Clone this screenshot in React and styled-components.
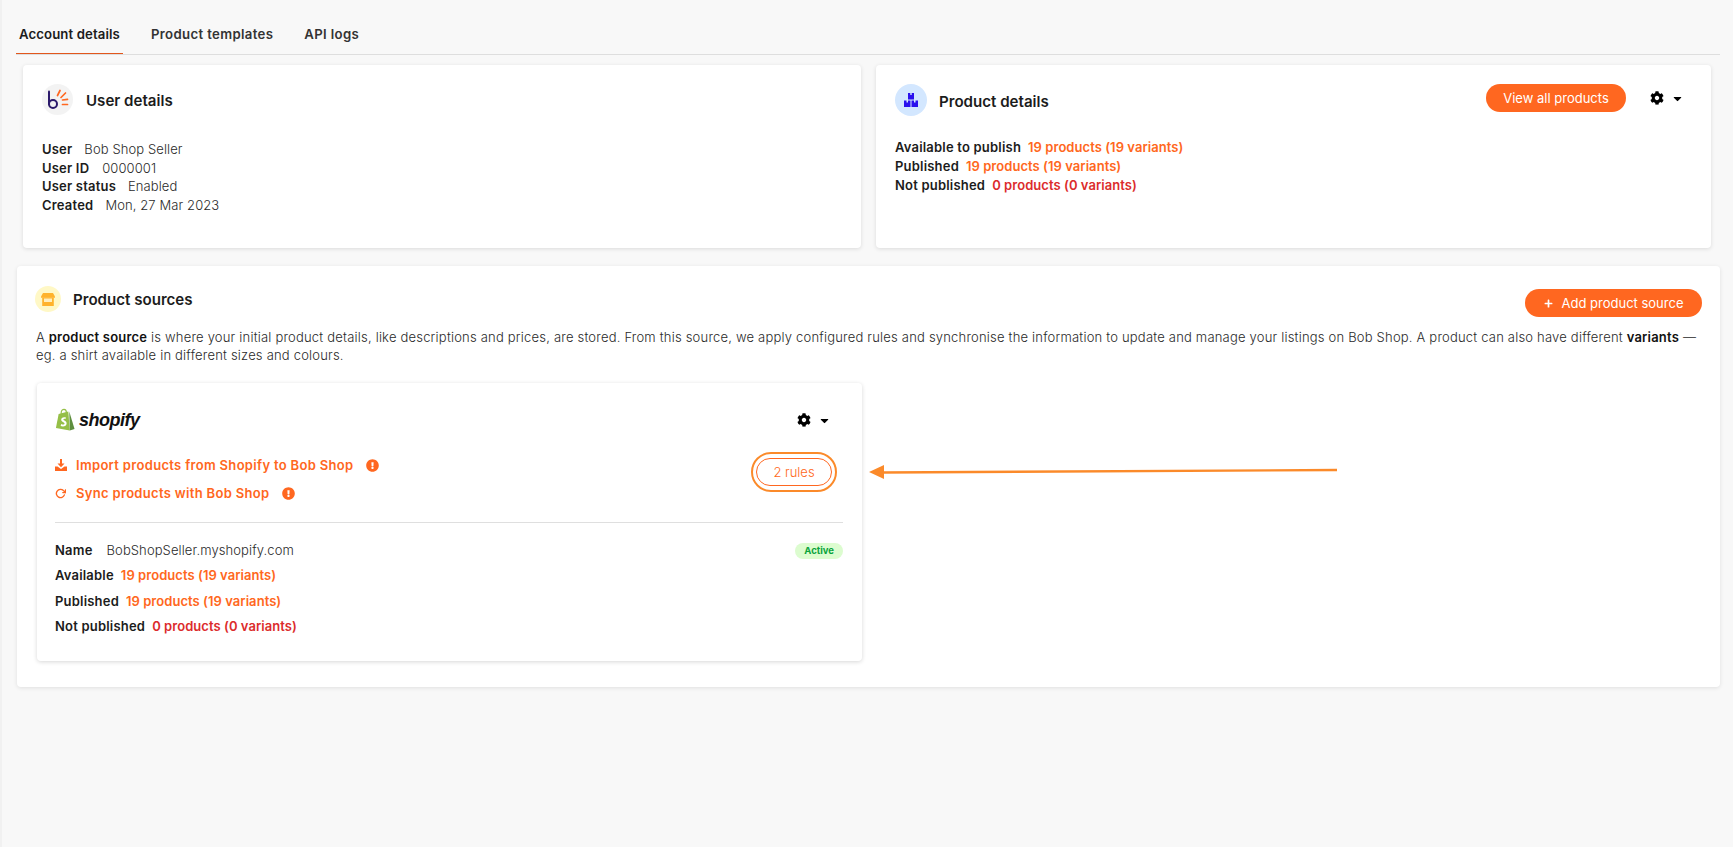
import styled, { createGlobalStyle } from "styled-components";
import { FaCog, FaCaretDown, FaExclamationCircle, FaPlus } from "react-icons/fa";
import { FiRotateCw } from "react-icons/fi";

const orange = "#ff6720";
const red = "#dc2c2c";
const ink = "#1c1c1c";

const GlobalStyle = createGlobalStyle`
  html, body {
    margin: 0;
    padding: 0;
    background: #f8f8f8;
    font-family: Inter, "Open Sans", sans-serif;
    color: ${ink};
  }
`;

const Page = styled.div`
  position: relative;
  width: 1733px;
  height: 847px;
  box-sizing: border-box;
  padding: 16px 13px 0 15px;
  overflow: hidden;
  border-left: 2px solid #f1f1f1;
  background: #f8f8f8;
`;

const Tabs = styled.div`
  display: flex;
  height: 38px;
  gap: 1px;
  border-bottom: 1px solid #dedede;
  margin-left: -1px;
`;

const Tab = styled.div`
  height: 38px;
  box-sizing: border-box;
  padding: 10px 3px 0;
  margin-right: 24px;
  font-size: 13.2px;
  font-weight: 600;
  letter-spacing: ${({ $active }) => ($active ? "0.1px" : "0.35px")};
  color: ${({ $active }) => ($active ? "#1c1c1c" : "#333")};
  border-bottom: ${({ $active }) => ($active ? "1px solid #e2571c" : "none")};
`;

const TopRow = styled.div`
  display: grid;
  grid-template-columns: 838px 835px;
  gap: 15px;
  margin: 10px 0 0 6px;
`;

const Card = styled.div`
  height: 183px;
  box-sizing: border-box;
  background: #fff;
  border-radius: 4px;
  box-shadow: 0 1px 4px rgba(0, 0, 0, 0.12);
  padding: 19px;
`;

const CardHead = styled.div`
  display: flex;
  align-items: center;
`;

const IconCircle = styled.div`
  display: flex;
  align-items: center;
  justify-content: center;
  flex: none;
  width: ${({ $size }) => $size}px;
  height: ${({ $size }) => $size}px;
  border-radius: 50%;
  background: ${({ $bg }) => $bg};
`;

const CardTitle = styled.div`
  margin-left: ${({ $gap }) => $gap}px;
  padding-top: ${({ $top }) => $top}px;
  font-size: 15.1px;
  font-weight: 600;
`;

const InfoList = styled.div`
  margin-top: ${({ $top }) => $top}px;
  font-size: 13px;
  line-height: ${({ $line }) => $line}px;
`;

const InfoRow = styled.div`
  white-space: nowrap;
`;

const Label = styled.span`
  font-weight: 600;
  letter-spacing: 0.2px;
  margin-right: ${({ $gap }) => $gap}px;
`;

const Value = styled.span`
  font-weight: 300;
  letter-spacing: 0.1px;
  color: #2a2a2a;
`;

const Count = styled.span`
  font-weight: 600;
  letter-spacing: 0.05px;
  color: ${({ $danger }) => ($danger ? red : orange)};
`;

const Spacer = styled.div`
  flex: 1;
`;

const PillButton = styled.div`
  display: flex;
  align-items: center;
  justify-content: center;
  box-sizing: border-box;
  width: ${({ $w }) => $w}px;
  height: 28px;
  border-radius: 14px;
  background: ${orange};
  color: #fff;
  font-size: 13px;
  font-weight: 400;
  white-space: nowrap;
  margin-top: ${({ $top }) => $top || 0}px;
`;

const PlusMark = styled(FaPlus)`
  margin-right: 9px;
`;

const GearMenu = styled.div`
  display: flex;
  align-items: center;
  gap: 7px;
  color: #000;
  margin: ${({ $top }) => $top}px ${({ $right }) => $right}px 0 ${({ $left }) => $left}px;
`;

const SourcesPanel = styled.div`
  height: 421px;
  box-sizing: border-box;
  margin-top: 18px;
  padding: 20px 18px 0 18px;
  background: #fff;
  border-radius: 4px;
  box-shadow: 0 1px 4px rgba(0, 0, 0, 0.1);
`;

const SourcesHead = styled.div`
  display: flex;
  align-items: flex-start;
`;

const SourcesIntro = styled.p`
  margin: 11px 0 0 1px;
  font-size: 13px;
  line-height: 18px;
  font-weight: 300;
  letter-spacing: 0.2px;
  color: #2a2a2a;
  width: 1668px;

  b {
    font-weight: 600;
    color: #111;
  }
`;

const SourceCard = styled.div`
  width: 825px;
  height: 278px;
  box-sizing: border-box;
  margin: 19px 0 0 2px;
  padding: 24px 19px 0 18px;
  background: #fff;
  border-radius: 4px;
  box-shadow: 0 1px 4px rgba(0, 0, 0, 0.16);
`;

const SourceTop = styled.div`
  display: flex;
  align-items: center;
  height: 26px;
`;

const ShopifyLogo = styled.div`
  display: flex;
  align-items: center;
  gap: 4px;
`;

const ShopifyWord = styled.span`
  font-family: "Liberation Sans", sans-serif;
  font-size: 18px;
  font-weight: 700;
  font-style: italic;
  letter-spacing: -0.5px;
  color: #111;
`;

const ActionBlock = styled.div`
  display: flex;
  justify-content: space-between;
  margin-top: 17px;
  height: 61px;
  border-bottom: 1px solid #dfdfdf;
  padding-bottom: 11px;
`;

const ActionList = styled.div`
  display: flex;
  flex-direction: column;
  gap: 10px;
  padding-top: 6px;
`;

const Action = styled.div`
  display: flex;
  align-items: center;
  height: 18px;
  color: ${orange};
  font-size: 13px;
  font-weight: 600;
  letter-spacing: 0.32px;
`;

const ActionIcon = styled.span`
  display: flex;
  width: 21px;
`;

const Alert = styled.span`
  display: flex;
  margin-left: 13px;
`;

const RulesRing = styled.div`
  display: flex;
  box-sizing: border-box;
  padding: 4px 3px;
  margin: 2px 6px 0 0;
  height: 40px;
  border: 2px solid #fb8a2a;
  border-radius: 20px;
  background: #fff;
`;

const RulesButton = styled.div`
  display: flex;
  align-items: center;
  justify-content: center;
  width: 74px;
  border: 1px solid ${orange};
  border-radius: 14px;
  color: ${orange};
  font-size: 13px;
  font-weight: 300;
`;

const SourceInfo = styled.div`
  position: relative;
  padding-top: 18px;
  font-size: 13px;
`;

const SourceRow = styled.div`
  height: 25.4px;
  line-height: 18px;
  white-space: nowrap;
`;

const ActiveBadge = styled.span`
  position: absolute;
  right: 0;
  top: 20px;
  height: 16px;
  line-height: 16px;
  padding: 0 9px;
  border-radius: 8px;
  background: #dcfccf;
  color: #0aa33c;
  font-size: 9.5px;
  font-weight: 700;
`;

const Arrow = styled.svg`
  position: absolute;
  left: 867px;
  top: 460px;
`;

const BobMark = () => (
  <svg width="22" height="24" viewBox="0 0 22 24" fill="none">
    <path d="M2 3.500V16" stroke="#2b1a6b" strokeWidth="2" strokeLinecap="round" />
    <circle cx="6" cy="16" r="4" stroke="#2b1a6b" strokeWidth="2" />
    <path
      d="M10.500 7.500 13 2.500M14 9.500l4.500-4.500M15.500 12l5-.7M15.500 16.500h5"
      stroke="#ff6720"
      strokeWidth="1.700"
      strokeLinecap="round"
    />
  </svg>
);

const BoxesIcon = () => (
  <svg width="14" height="14" viewBox="0 0 14 14" fill="#2a10ee">
    <path d="M4 0h2.300v2h1.400V0H10v6.500H4z" />
    <path d="M0 7.500h2.500v2H4v-2h2.500V14H0z" />
    <path d="M7.500 7.500H10v2h1.500v-2H14V14H7.500z" />
  </svg>
);

const StoreIcon = () => (
  <svg width="14" height="13" viewBox="0 0 14 13">
    <path d="M2 0h10l2 3.500v1.200H0V3.500z" fill="#ffb32c" />
    <path d="M1.200 4.500h11.600V13H1.200z" fill="#ffb32c" />
    <path d="M3 5.500h8v3.500H3z" fill="#ffeebd" />
  </svg>
);

const ShopifyBag = () => (
  <svg width="20" height="24" viewBox="0 0 21 24">
    <path d="M1 20.500 3.800 5.800 14 3l1.500 20z" fill="#95bf47" />
    <path d="M15 3.200 20.500 21.500 15.500 23z" fill="#5e8e3e" />
    <path d="M6.500 6V4.500C6.500 2 8 .8 9.500.8s2.500 1.500 2.500 3.500" fill="none" stroke="#95bf47" strokeWidth="1.200" />
    <path d="M11.500 9.500c-3-1-5 .5-5 2.200 0 2.300 3.500 2.400 3.500 4 0 1.300-2 1.300-3.500.4l-.6 2.200c2.800 1.200 6.300.3 6.300-2.900 0-2.700-3.400-2.900-3.400-4 0-.8 1.200-1 2.200-.5z" fill="#fff" />
  </svg>
);

const ImportIcon = () => (
  <svg width="12" height="12" viewBox="0 0 12 12" fill={orange}>
    <path d="M5 0h2v4.500h2.500L6 8.200 2.500 4.500H5z" />
    <path d="M0 7.500h2.500L6 10l3.500-2.500H12V12H0z" />
  </svg>
);

const Gear = ({ left = 0, right = 0, top = 0 }) => (
  <GearMenu $left={left} $right={right} $top={top}>
    <FaCog size={14} />
    <FaCaretDown size={13} />
  </GearMenu>
);

export default function App() {
  return (
    <>
      <GlobalStyle />
      <Page>
        <Tabs>
          <Tab $active>Account details</Tab>
          <Tab>Product templates</Tab>
          <Tab>API logs</Tab>
        </Tabs>

        <TopRow>
          <Card>
            <CardHead>
              <IconCircle $size={31} $bg="#f3f3f3">
                <BobMark />
              </IconCircle>
              <CardTitle $gap={13} $top={2}>User details</CardTitle>
            </CardHead>
            <InfoList $top={25} $line={18.6}>
              <InfoRow><Label $gap={12}>User</Label><Value>Bob Shop Seller</Value></InfoRow>
              <InfoRow><Label $gap={13}>User ID</Label><Value>0000001</Value></InfoRow>
              <InfoRow><Label $gap={12}>User status</Label><Value>Enabled</Value></InfoRow>
              <InfoRow><Label $gap={12}>Created</Label><Value>Mon, 27 Mar 2023</Value></InfoRow>
            </InfoList>
          </Card>

          <Card>
            <CardHead>
              <IconCircle $size={32} $bg="#d3e7ff">
                <BoxesIcon />
              </IconCircle>
              <CardTitle $gap={12} $top={2}>Product details</CardTitle>
              <Spacer />
              <PillButton $w={140} $top={-4}>View all products</PillButton>
              <Gear left={24} right={8} top={-4} />
            </CardHead>
            <InfoList $top={22} $line={19}>
              <InfoRow><Label $gap={7}>Available to publish</Label><Count>19 products (19 variants)</Count></InfoRow>
              <InfoRow><Label $gap={7}>Published</Label><Count>19 products (19 variants)</Count></InfoRow>
              <InfoRow><Label $gap={7}>Not published</Label><Count $danger>0 products (0 variants)</Count></InfoRow>
            </InfoList>
          </Card>
        </TopRow>

        <SourcesPanel>
          <SourcesHead>
            <IconCircle $size={26} $bg="#fff8c6">
              <StoreIcon />
            </IconCircle>
            <CardTitle $gap={12} $top={4}>Product sources</CardTitle>
            <Spacer />
            <PillButton $w={177} $top={3}>
              <PlusMark size={9} />
              Add product source
            </PillButton>
          </SourcesHead>
          <SourcesIntro>
            A <b>product source</b> is where your initial product details, like descriptions and prices, are stored. From this source, we apply configured rules and synchronise the information to update and manage your listings on Bob Shop. A product can also have different <b>variants</b> —
            <br />
            eg. a shirt available in different sizes and colours.
          </SourcesIntro>

          <SourceCard>
            <SourceTop>
              <ShopifyLogo>
                <ShopifyBag />
                <ShopifyWord>shopify</ShopifyWord>
              </ShopifyLogo>
              <Spacer />
              <Gear right={12} />
            </SourceTop>
            <ActionBlock>
              <ActionList>
                <Action>
                  <ActionIcon><ImportIcon /></ActionIcon>
                  Import products from Shopify to Bob Shop
                  <Alert><FaExclamationCircle size={13} /></Alert>
                </Action>
                <Action>
                  <ActionIcon><FiRotateCw size={11} strokeWidth={3} /></ActionIcon>
                  Sync products with Bob Shop
                  <Alert><FaExclamationCircle size={13} /></Alert>
                </Action>
              </ActionList>
              <RulesRing>
                <RulesButton>2 rules</RulesButton>
              </RulesRing>
            </ActionBlock>
            <SourceInfo>
              <ActiveBadge>Active</ActiveBadge>
              <SourceRow><Label $gap={14}>Name</Label><Value>BobShopSeller.myshopify.com</Value></SourceRow>
              <SourceRow><Label $gap={7}>Available</Label><Count>19 products (19 variants)</Count></SourceRow>
              <SourceRow><Label $gap={7}>Published</Label><Count>19 products (19 variants)</Count></SourceRow>
              <SourceRow><Label $gap={7}>Not published</Label><Count $danger>0 products (0 variants)</Count></SourceRow>
            </SourceInfo>
          </SourceCard>
        </SourcesPanel>

        <Arrow width="470" height="22" viewBox="0 0 470 22">
          <path d="M0 12 15 5v14z" fill="#fb8a2a" />
          <path d="M14 12.500 468 10" stroke="#fb8a2a" strokeWidth="2.400" />
        </Arrow>
      </Page>
    </>
  );
}
